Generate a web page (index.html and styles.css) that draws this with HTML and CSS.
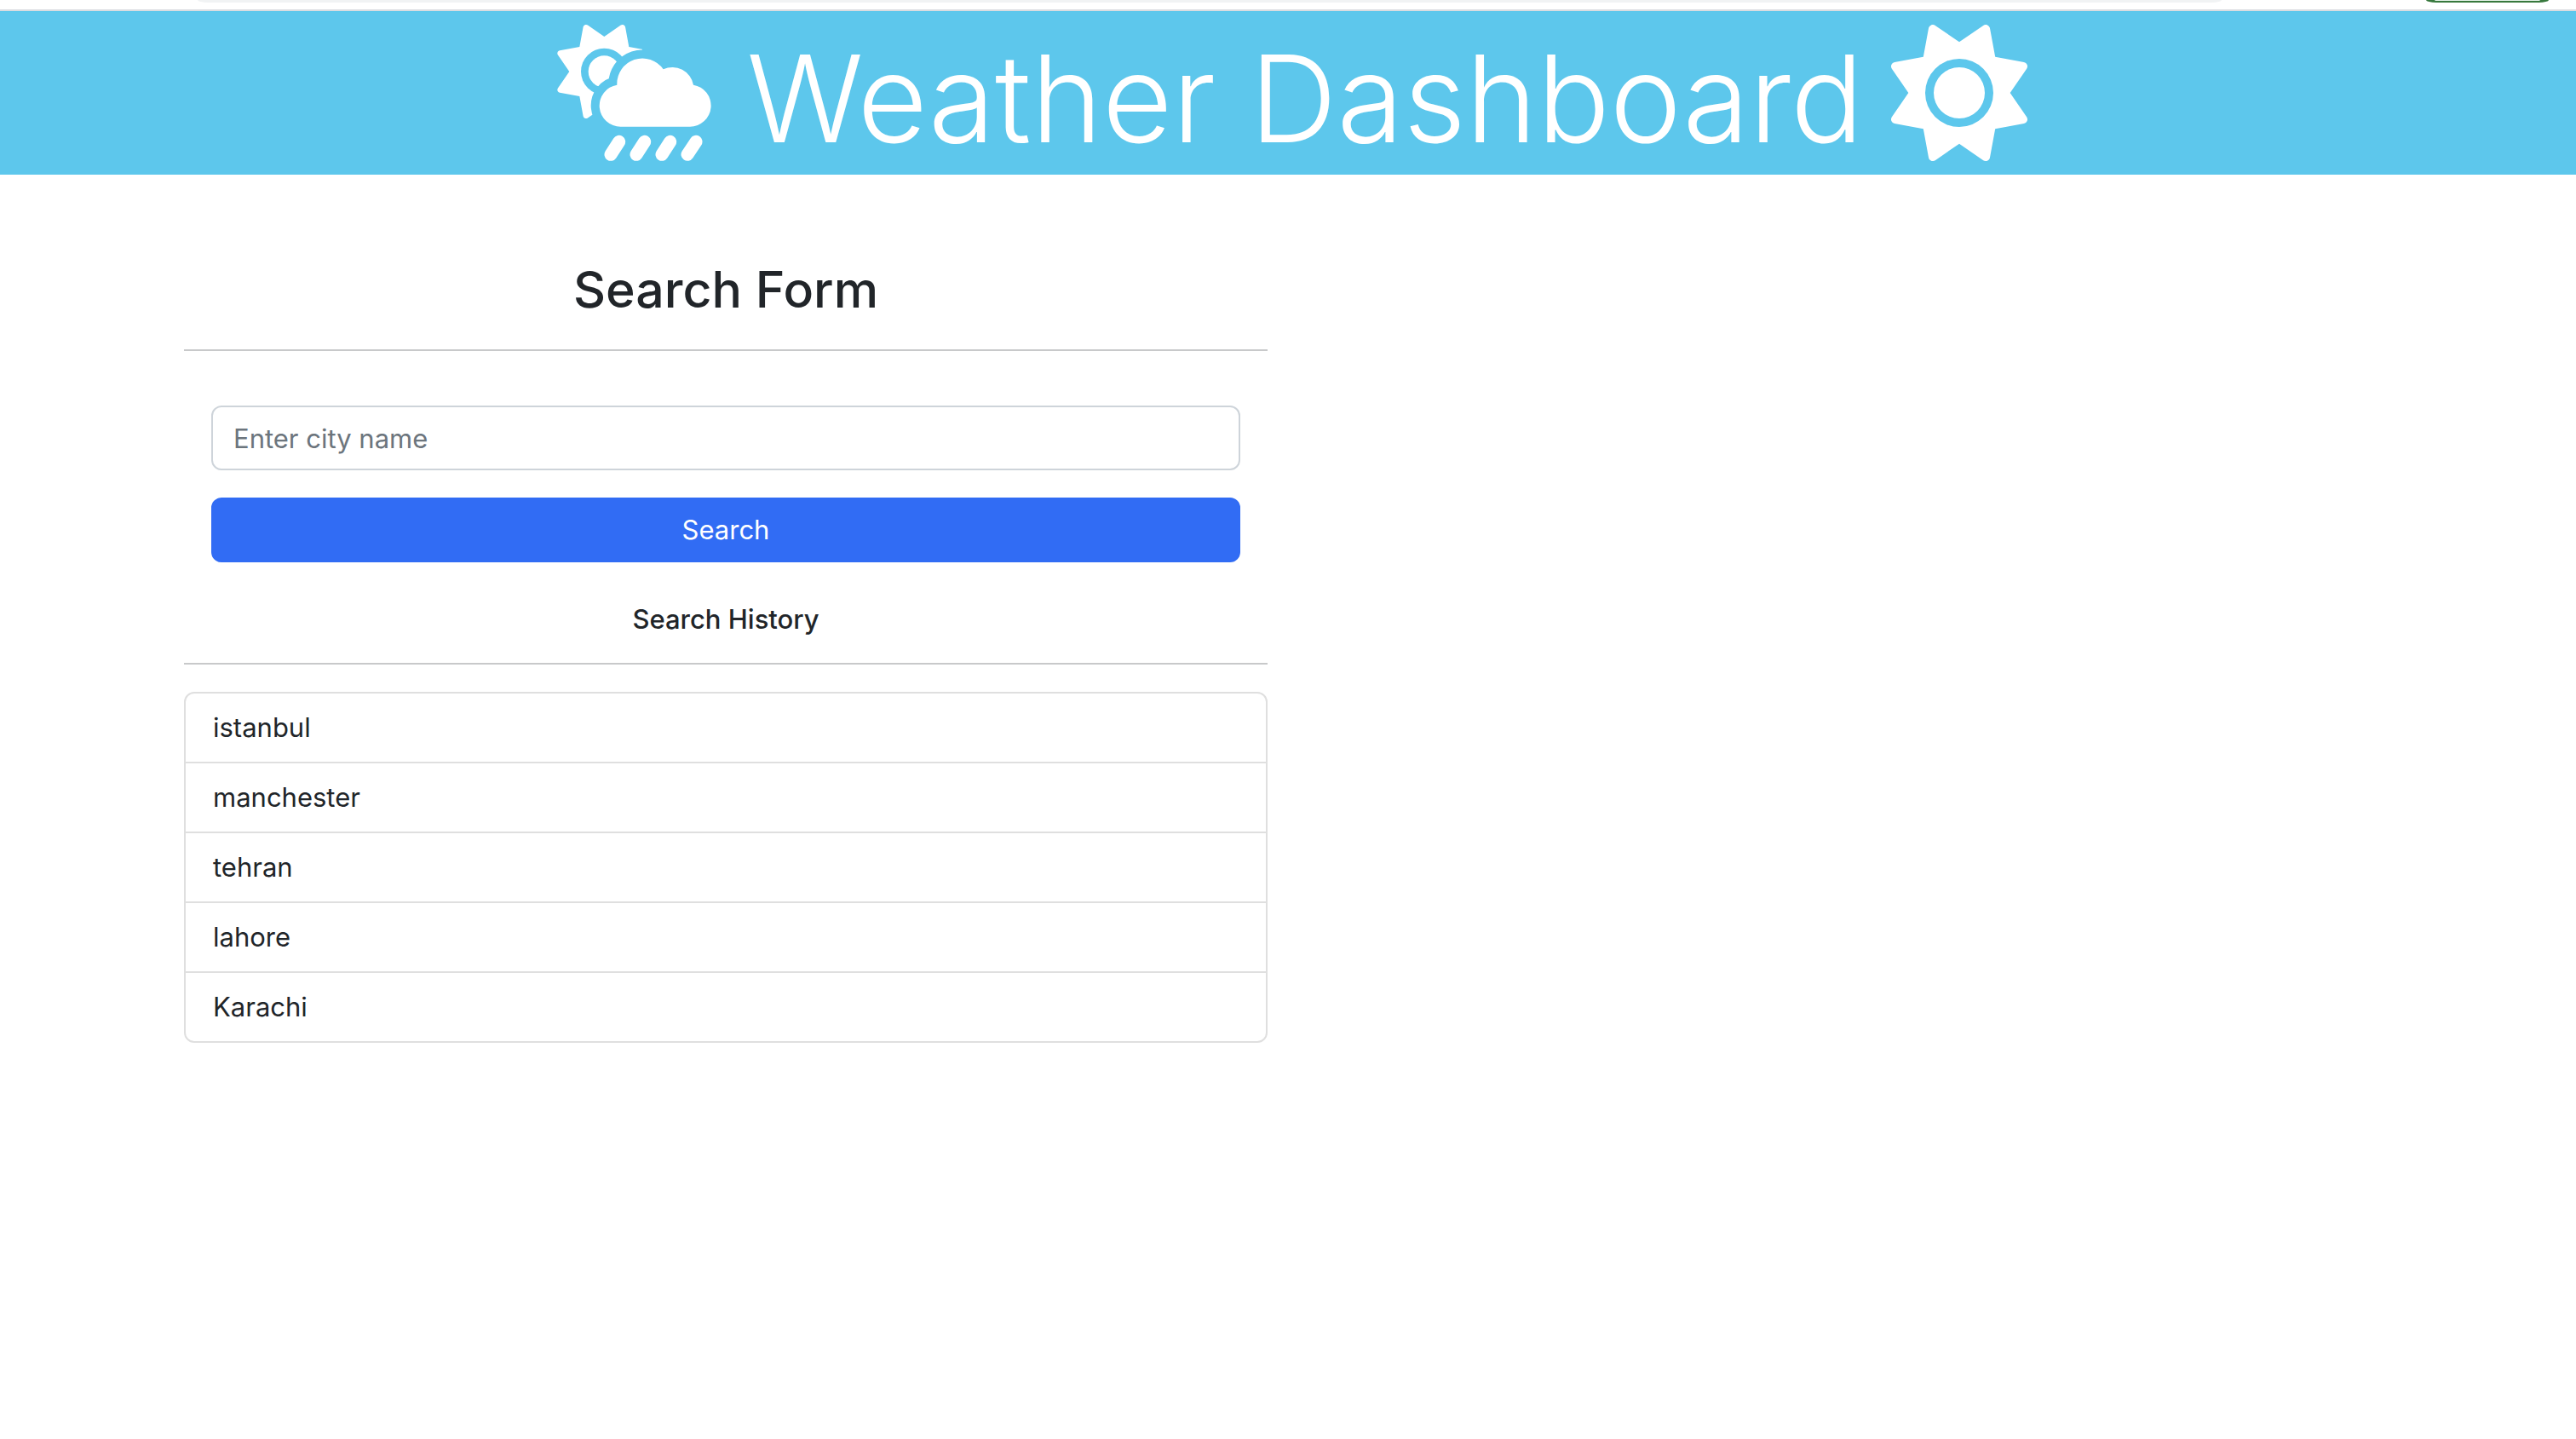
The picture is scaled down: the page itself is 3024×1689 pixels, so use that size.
FILE: index.html
```html
<!DOCTYPE html>
<html lang="en">
<head>
<meta charset="utf-8">
<title>Weather Dashboard</title>
<link rel="stylesheet" href="styles.css">
</head>
<body>
<div class="toolbar">
  <div class="address-bar"></div>
  <div class="update-chip"></div>
</div>
<header class="banner">
  <svg class="icon-rain" viewBox="9 87 600 480" aria-hidden="true">
    <defs>
      <path id="cloud" d="M263 446A74 74 0 0 1 250 299A89.500 89.500 0 0 1 413 244A75 75 0 0 1 519 299A74 74 0 0 1 507 446Z"/>
      <mask id="behind-cloud" maskUnits="userSpaceOnUse" x="9" y="87" width="331" height="480">
        <rect x="9" y="87" width="331" height="480" fill="#fff"/>
        <circle cx="205" cy="252" r="82" fill="#000"/>
        <circle cx="205" cy="252" r="56" fill="#fff"/>
        <use href="#cloud" fill="#000" stroke="#000" stroke-width="60"/>
      </mask>
    </defs>
    <g mask="url(#behind-cloud)">
      <path transform="translate(40 87) scale(.6445)" d="M361.500 1.200c5 2.100 8.600 6.600 9.600 11.900L391 121l107.900 19.800c5.300 1 9.800 4.600 11.900 9.600s1.500 10.700-1.600 15.200L446.900 256l62.300 90.300c3.100 4.500 3.700 10.200 1.600 15.200s-6.600 8.600-11.900 9.600L391 391 371.100 498.900c-1 5.300-4.600 9.800-9.600 11.900s-10.700 1.500-15.200-1.600L256 446.900l-90.300 62.300c-4.500 3.100-10.200 3.700-15.200 1.600s-8.600-6.600-9.600-11.900L121 391 13.100 371.100c-5.300-1-9.800-4.600-11.900-9.600s-1.500-10.700 1.600-15.200L65.100 256 2.800 165.700c-3.100-4.500-3.700-10.200-1.600-15.200s6.600-8.600 11.900-9.600L121 121 140.900 13.100c1-5.300 4.600-9.800 9.600-11.900s10.700-1.500 15.200 1.600L256 65.100 346.300 2.800c4.500-3.100 10.200-3.700 15.200-1.600z"/>
    </g>
    <use href="#cloud"/>
    <path class="drops" d="M257 499L228 544M347 499L318 544M437 499L408 544M528 499L498 544"/>
  </svg>
  <h1 class="banner-title">Weather Dashboard</h1>
  <svg class="icon-sun" viewBox="0 0 512 512" aria-hidden="true">
    <path d="M361.500 1.200c5 2.100 8.600 6.600 9.600 11.900L391 121l107.900 19.800c5.300 1 9.800 4.600 11.900 9.600s1.500 10.700-1.600 15.200L446.900 256l62.300 90.300c3.100 4.500 3.700 10.200 1.600 15.200s-6.600 8.600-11.900 9.600L391 391 371.100 498.900c-1 5.300-4.600 9.800-9.600 11.900s-10.700 1.500-15.200-1.600L256 446.900l-90.300 62.300c-4.500 3.100-10.200 3.700-15.200 1.600s-8.600-6.600-9.600-11.900L121 391 13.100 371.100c-5.300-1-9.800-4.600-11.900-9.600s-1.500-10.700 1.600-15.200L65.100 256 2.800 165.700c-3.100-4.500-3.700-10.200-1.600-15.200s6.600-8.600 11.900-9.600L121 121 140.900 13.100c1-5.300 4.600-9.800 9.600-11.900s10.700-1.500 15.200 1.600L256 65.100 346.300 2.800c4.500-3.100 10.200-3.700 15.200-1.600zM160 256a96 96 0 1 1 192 0 96 96 0 1 1 -192 0zm224 0a128 128 0 1 0 -256 0 128 128 0 1 0 256 0z"/>
  </svg>
</header>
<main class="layout">
  <aside class="sidebar">
    <h2 class="form-title">Search Form</h2>
    <hr class="rule">
    <form class="search-form">
      <input class="field" type="text" placeholder="Enter city name" aria-label="City name">
      <button class="submit" type="submit">Search</button>
    </form>
    <h3 class="history-title">Search History</h3>
    <hr class="rule">
    <ul class="history">
      <li>istanbul</li>
      <li>manchester</li>
      <li>tehran</li>
      <li>lahore</li>
      <li>Karachi</li>
    </ul>
  </aside>
  <section class="results"></section>
</main>
</body>
</html>
```
FILE: styles.css
```css
* { box-sizing: border-box; }
body {
  margin: 0;
  background: #fff;
  color: #212529;
  font: 400 31px/48px Inter, "Liberation Sans", sans-serif;
}
.toolbar {
  display: flex;
  justify-content: space-between;
  align-items: flex-start;
  height: 13px;
  padding: 0 32px 0 232px;
  border-bottom: 2px solid #dadce0;
}
.address-bar {
  flex: 1;
  margin-right: 240px;
  height: 3px;
  background: #f1f3f4;
  border-radius: 0 0 12px 12px / 0 0 3px 3px;
}
.update-chip {
  width: 144px;
  height: 3px;
  background: #e6f4ea;
  border: solid #37783d;
  border-width: 0 10px 2px;
  border-radius: 0 0 12px 12px / 0 0 3px 3px;
}
.banner {
  display: flex;
  justify-content: center;
  align-items: center;
  gap: 32px;
  padding: 16px;
  background: #5dc7ec;
  color: #fff;
}
.banner svg { fill: currentColor; height: 160px; }
.icon-rain { width: 200px; }
.icon-sun { width: 160px; }
.drops { fill: none; stroke: currentColor; stroke-width: 45; stroke-linecap: round; }
.banner-title {
  margin: 0;
  padding-top: 12px;
  font-size: 142px;
  font-weight: 300;
  line-height: 148px;
}
.layout {
  display: grid;
  grid-template-columns: 1fr 1fr;
  gap: 48px;
  padding: 96px 216px;
}
.form-title, .history-title {
  margin: 0;
  text-align: center;
  font-weight: 500;
}
.form-title { font-size: 59px; line-height: 77px; }
.rule {
  margin: 32px 0;
  border: 0;
  border-top: 2px solid #c8c9ca;
}
.search-form {
  display: flex;
  flex-direction: column;
  gap: 32px;
  padding: 32px;
}
.field, .submit {
  height: 76px;
  padding: 0 24px;
  border: 2px solid #ced4da;
  border-radius: 12px;
  font: inherit;
}
.field { background: #fff; color: #212529; }
.field::placeholder { color: #6c757d; opacity: 1; }
.submit { background: #316cf4; border-color: #316cf4; color: #fff; }
.history-title { margin-top: 16px; font-size: 31px; line-height: 38px; }
.history {
  margin: 0;
  padding: 0;
  list-style: none;
  border: 2px solid #dfdfdf;
  border-radius: 12px;
}
.history li { padding: 16px 32px; }
.history li + li { border-top: 2px solid #dfdfdf; }
```
